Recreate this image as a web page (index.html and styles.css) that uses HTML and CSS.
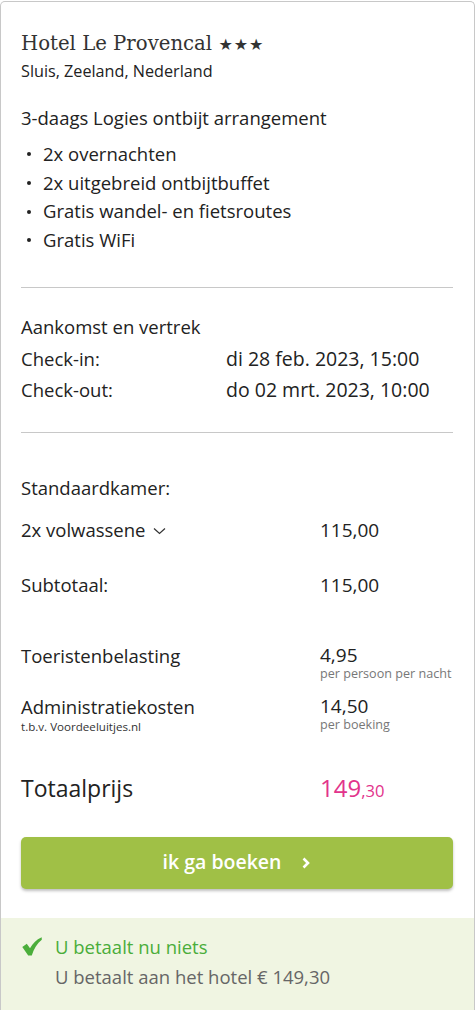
FILE: index.html
```html
<!DOCTYPE html>
<html lang="nl">
<head>
<meta charset="utf-8">
<link rel="stylesheet" href="styles.css">
</head>
<body>
<div class="card">
  <div class="body">
    <h1 class="title">Hotel Le Provencal <span class="stars">★★★</span></h1>
    <div class="location">Sluis, Zeeland, Nederland</div>
    <div class="package">3-daags Logies ontbijt arrangement</div>
    <ul class="features">
      <li>2x overnachten</li>
      <li>2x uitgebreid ontbijtbuffet</li>
      <li>Gratis wandel- en fietsroutes</li>
      <li>Gratis WiFi</li>
    </ul>
    <hr class="sep">
    <div class="dates">
      <div class="dates-head">Aankomst en vertrek</div>
      <div class="date-row"><span class="dl">Check-in:</span><span class="dv">di 28 feb. 2023, 15:00</span></div>
      <div class="date-row"><span class="dl">Check-out:</span><span class="dv">do 02 mrt. 2023, 10:00</span></div>
    </div>
    <hr class="sep">
    <div class="room">Standaardkamer:</div>
    <div class="row guests">
      <span class="label">2x volwassene <svg class="chev" width="13" height="8" viewBox="0 0 13 8"><path d="M1 1.5l5.5 5 5.5-5" fill="none" stroke="#333" stroke-width="1.2"/></svg></span>
      <span class="val">115,00</span>
    </div>
    <div class="row subtotal">
      <span class="label">Subtotaal:</span>
      <span class="val">115,00</span>
    </div>
    <div class="row fee fee1">
      <div class="label">Toeristenbelasting</div>
      <div class="val"><div class="amt">4,95</div><div class="note">per persoon per nacht</div></div>
    </div>
    <div class="row fee fee2">
      <div class="label"><div>Administratiekosten</div><div class="small">t.b.v. Voordeeluitjes.nl</div></div>
      <div class="val"><div class="amt">14,50</div><div class="note">per boeking</div></div>
    </div>
    <div class="row total">
      <span class="label">Totaalprijs</span>
      <span class="price">149<small>,30</small></span>
    </div>
    <button class="book">ik ga boeken <svg class="arrow" width="10" height="12" viewBox="0 0 10 12"><path d="M2.5 1.5l4.5 4.5-4.5 4.5" fill="none" stroke="#fff" stroke-width="2.6"/></svg></button>
  </div>
  <div class="footer">
    <div class="pay-now"><svg class="check" width="20" height="19" viewBox="0 0 20 19"><path d="M0.3 10L4.8 6.8L8 11.2C10.5 6.6 14.2 2.6 19.7 0.2L19.8 2.8C15.2 6.2 11.8 11.8 9.8 18.6H6.2Z" fill="#4bae3b"/></svg><span>U betaalt nu niets</span></div>
    <div class="pay-hotel">U betaalt aan het hotel € 149,30</div>
  </div>
</div>
</body>
</html>
```

FILE: styles.css
```css
* { box-sizing: border-box; }
html, body { margin: 0; padding: 0; background: #fff; }
body { font-family: "Open Sans", sans-serif; color: #222; }
.card {
  width: 475px;
  margin-top: 1px;
  border: 1px solid #c8c8c8;
  border-radius: 5px 5px 0 0;
  border-bottom: none;
  overflow: hidden;
}
.body { padding: 30px 21px 29px 20px; }
.title {
  margin: 0;
  font-family: "DejaVu Serif", serif;
  font-weight: normal;
  font-size: 19.7px;
  line-height: 24px;
  color: #333;
}
.stars { font-size: 16px; letter-spacing: 1px; font-family: "DejaVu Sans", sans-serif; }
.location { font-size: 16.2px; line-height: 22px; margin-top: 3px; }
.package { font-size: 18.5px; line-height: 26px; margin-top: 23px; }
.features { list-style: none; margin: 8px 0 33px 0; padding: 0; font-size: 18.5px; }
.features li { display: flex; align-items: center; height: 28.7px; }
.features li::before {
  content: ""; width: 4px; height: 4px; border-radius: 50%; background: #222;
  margin: 2px 12px 0 6px;
}
.sep { border: none; border-top: 1px solid #c8c8c8; margin: 0; }
.dates { padding: 23px 0 27px; font-size: 18.5px; }
.dates-head { line-height: 32px; }
.date-row { display: flex; align-items: baseline; line-height: 31px; }
.dl { width: 205px; }
.dv { font-size: 19.5px; }
.room { font-size: 18.5px; margin-top: 43px; line-height: 24px; }
.row { display: flex; font-size: 18.5px; }
.row .label { width: 299px; }
.row .val { font-size: 19px; }
.guests { margin-top: 18px; line-height: 24px; align-items: baseline; }
.chev { margin-left: 3px; vertical-align: 2px; }
.subtotal { margin-top: 31px; line-height: 24px; align-items: baseline; }
.fee { line-height: 22px; }
.fee1 { margin-top: 48px; }
.fee2 { margin-top: 14px; }
.amt { line-height: 20px; }
.note { font-size: 12.6px; line-height: 17px; color: #777; }
.small { font-size: 11.6px; line-height: 17px; color: #333; }
.total { margin-top: 38px; align-items: baseline; line-height: 30px; }
.total .label { font-size: 23px; }
.price { color: #e2338b; font-size: 24px; }
.price small { font-size: 16.6px; }
.book {
  display: flex; align-items: center; justify-content: center; gap: 20px;
  margin-top: 31px;
  width: 432px; height: 52px;
  border: none; border-radius: 5px;
  background: #a0c046; color: #fff;
  font-family: inherit; font-size: 19.5px; font-weight: 600;
  box-shadow: 0 2px 3px rgba(0,0,0,0.25);
  padding: 0 0 3px 0;
}
.arrow { margin-top: 3px; }
.footer { background: #f0f5e2; padding: 17px 21px 20px 21px; height: 92px; }
.pay-now { display: flex; align-items: center; gap: 13px; color: #4aad3a; font-size: 18.5px; line-height: 24px; }
.check { margin-top: -1px; }
.pay-hotel { color: #666; font-size: 18.5px; line-height: 24px; margin-top: 6px; padding-left: 33px; }
```
